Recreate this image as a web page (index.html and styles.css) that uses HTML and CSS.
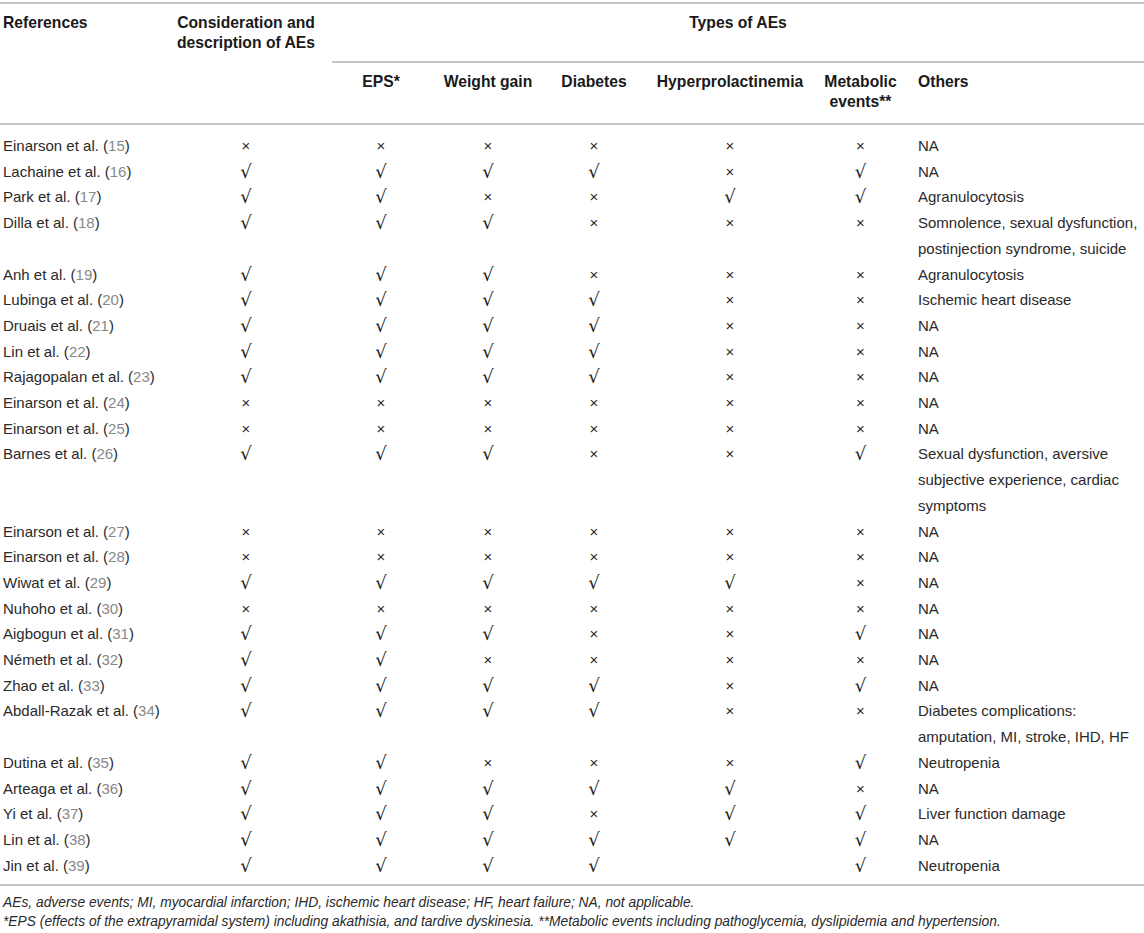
FILE: index.html
```html
<!DOCTYPE html>
<html>
<head>
<meta charset="utf-8">
<link rel="stylesheet" href="styles.css">
</head>
<body>
<div class="wrap">
<table class="ae">
<colgroup>
<col class="c-ref"><col class="c-con"><col class="c-eps"><col class="c-wg"><col class="c-dia"><col class="c-hyp"><col class="c-met"><col class="c-oth">
</colgroup>
<thead>
<tr class="h1">
<th rowspan="2" class="left">References</th>
<th rowspan="2">Consideration and description of AEs</th>
<th colspan="6" class="types"><div class="types-in">Types of AEs</div></th>
</tr>
<tr class="h2">
<th class="nw">EPS*</th>
<th class="nw">Weight gain</th>
<th class="nw">Diabetes</th>
<th class="nw">Hyperprolactinemia</th>
<th>Metabolic events**</th>
<th class="left">Others</th>
</tr>
</thead>
<tbody>
<tr class="first"><td>Einarson et al. (<span class="rf">15</span>)</td><td>×</td><td>×</td><td>×</td><td>×</td><td>×</td><td>×</td><td>NA</td></tr>
<tr><td>Lachaine et al. (<span class="rf">16</span>)</td><td class="ck">√</td><td class="ck">√</td><td class="ck">√</td><td class="ck">√</td><td>×</td><td class="ck">√</td><td>NA</td></tr>
<tr><td>Park et al. (<span class="rf">17</span>)</td><td class="ck">√</td><td class="ck">√</td><td>×</td><td>×</td><td class="ck">√</td><td class="ck">√</td><td>Agranulocytosis</td></tr>
<tr><td>Dilla et al. (<span class="rf">18</span>)</td><td class="ck">√</td><td class="ck">√</td><td class="ck">√</td><td>×</td><td>×</td><td>×</td><td>Somnolence, sexual dysfunction, postinjection syndrome, suicide</td></tr>
<tr><td>Anh et al. (<span class="rf">19</span>)</td><td class="ck">√</td><td class="ck">√</td><td class="ck">√</td><td>×</td><td>×</td><td>×</td><td>Agranulocytosis</td></tr>
<tr><td>Lubinga et al. (<span class="rf">20</span>)</td><td class="ck">√</td><td class="ck">√</td><td class="ck">√</td><td class="ck">√</td><td>×</td><td>×</td><td>Ischemic heart disease</td></tr>
<tr><td>Druais et al. (<span class="rf">21</span>)</td><td class="ck">√</td><td class="ck">√</td><td class="ck">√</td><td class="ck">√</td><td>×</td><td>×</td><td>NA</td></tr>
<tr><td>Lin et al. (<span class="rf">22</span>)</td><td class="ck">√</td><td class="ck">√</td><td class="ck">√</td><td class="ck">√</td><td>×</td><td>×</td><td>NA</td></tr>
<tr><td>Rajagopalan et al. (<span class="rf">23</span>)</td><td class="ck">√</td><td class="ck">√</td><td class="ck">√</td><td class="ck">√</td><td>×</td><td>×</td><td>NA</td></tr>
<tr><td>Einarson et al. (<span class="rf">24</span>)</td><td>×</td><td>×</td><td>×</td><td>×</td><td>×</td><td>×</td><td>NA</td></tr>
<tr><td>Einarson et al. (<span class="rf">25</span>)</td><td>×</td><td>×</td><td>×</td><td>×</td><td>×</td><td>×</td><td>NA</td></tr>
<tr><td>Barnes et al. (<span class="rf">26</span>)</td><td class="ck">√</td><td class="ck">√</td><td class="ck">√</td><td>×</td><td>×</td><td class="ck">√</td><td>Sexual dysfunction, aversive subjective experience, cardiac symptoms</td></tr>
<tr><td>Einarson et al. (<span class="rf">27</span>)</td><td>×</td><td>×</td><td>×</td><td>×</td><td>×</td><td>×</td><td>NA</td></tr>
<tr><td>Einarson et al. (<span class="rf">28</span>)</td><td>×</td><td>×</td><td>×</td><td>×</td><td>×</td><td>×</td><td>NA</td></tr>
<tr><td>Wiwat et al. (<span class="rf">29</span>)</td><td class="ck">√</td><td class="ck">√</td><td class="ck">√</td><td class="ck">√</td><td class="ck">√</td><td>×</td><td>NA</td></tr>
<tr><td>Nuhoho et al. (<span class="rf">30</span>)</td><td>×</td><td>×</td><td>×</td><td>×</td><td>×</td><td>×</td><td>NA</td></tr>
<tr><td>Aigbogun et al. (<span class="rf">31</span>)</td><td class="ck">√</td><td class="ck">√</td><td class="ck">√</td><td>×</td><td>×</td><td class="ck">√</td><td>NA</td></tr>
<tr><td>Németh et al. (<span class="rf">32</span>)</td><td class="ck">√</td><td class="ck">√</td><td>×</td><td>×</td><td>×</td><td>×</td><td>NA</td></tr>
<tr><td>Zhao et al. (<span class="rf">33</span>)</td><td class="ck">√</td><td class="ck">√</td><td class="ck">√</td><td class="ck">√</td><td>×</td><td class="ck">√</td><td>NA</td></tr>
<tr><td>Abdall-Razak et al. (<span class="rf">34</span>)</td><td class="ck">√</td><td class="ck">√</td><td class="ck">√</td><td class="ck">√</td><td>×</td><td>×</td><td>Diabetes complications: amputation, MI, stroke, IHD, HF</td></tr>
<tr><td>Dutina et al. (<span class="rf">35</span>)</td><td class="ck">√</td><td class="ck">√</td><td>×</td><td>×</td><td>×</td><td class="ck">√</td><td>Neutropenia</td></tr>
<tr><td>Arteaga et al. (<span class="rf">36</span>)</td><td class="ck">√</td><td class="ck">√</td><td class="ck">√</td><td class="ck">√</td><td class="ck">√</td><td>×</td><td>NA</td></tr>
<tr><td>Yi et al. (<span class="rf">37</span>)</td><td class="ck">√</td><td class="ck">√</td><td class="ck">√</td><td>×</td><td class="ck">√</td><td class="ck">√</td><td>Liver function damage</td></tr>
<tr><td>Lin et al. (<span class="rf">38</span>)</td><td class="ck">√</td><td class="ck">√</td><td class="ck">√</td><td class="ck">√</td><td class="ck">√</td><td class="ck">√</td><td>NA</td></tr>
<tr class="last"><td>Jin et al. (<span class="rf">39</span>)</td><td class="ck">√</td><td class="ck">√</td><td class="ck">√</td><td class="ck">√</td><td></td><td class="ck">√</td><td>Neutropenia</td></tr>
</tbody>
</table>
<div class="notes">
<p>AEs, adverse events; MI, myocardial infarction; IHD, ischemic heart disease; HF, heart failure; NA, not applicable.</p>
<p>*EPS (effects of the extrapyramidal system) including akathisia, and tardive dyskinesia. **Metabolic events including pathoglycemia, dyslipidemia and hypertension.</p>
</div>
</div>
</body>
</html>
```

FILE: styles.css
```css
html, body {
  margin: 0;
  padding: 0;
  background: #fff;
}
body {
  font-family: "Liberation Sans", Arial, sans-serif;
  color: #222;
  font-size: 15px;
}
.wrap {
  width: 1144px;
  padding-top: 2px;
}
.ae {
  width: 1144px;
  table-layout: fixed;
  border-collapse: collapse;
  border-top: 2px solid #c4c4c4;
  border-bottom: 2px solid #c4c4c4;
}
.c-ref { width: 172px; }
.c-con { width: 148px; }
.c-eps { width: 122px; }
.c-wg { width: 92px; }
.c-dia { width: 120px; }
.c-hyp { width: 152px; }
.c-met { width: 109px; }
.c-oth { width: 229px; }

th {
  font-weight: bold;
  font-size: 15.7px;
  color: #1a1a1a;
  line-height: 20px;
  vertical-align: top;
  text-align: center;
  padding: 0;
}
th.left { text-align: left; padding-left: 3px; }
th.nw { white-space: nowrap; }
.h1 th { padding-top: 9px; }
.h1 th.types { padding: 0 0 0 12px; }
.types-in {
  height: 48px;
  padding-top: 9px;
  border-bottom: 2px solid #c4c4c4;
  text-align: center;
}
.h2 th { padding-top: 9px; padding-bottom: 11px; }
thead { border-bottom: 2px solid #c4c4c4; }

td {
  padding: 0;
  height: 25.7px;
  line-height: 25.7px;
  vertical-align: top;
  text-align: center;
  color: #2a2a2a;
}
td.ck {
  font-family: "DejaVu Sans", sans-serif;
  font-size: 18px;
  color: #222;
}
td:first-child { text-align: left; padding-left: 3px; font-size: 15px; }
td:last-child { text-align: left; padding-left: 3px; font-size: 15px; }
tr.first td { padding-top: 8px; }
tr.last td { padding-bottom: 6px; }
.rf { color: #888; }

.notes {
  padding: 7px 0 0 3px;
  font-style: italic;
  font-size: 13.8px;
  line-height: 19px;
  color: #2a2a2a;
}
.notes p { margin: 0; }
```
